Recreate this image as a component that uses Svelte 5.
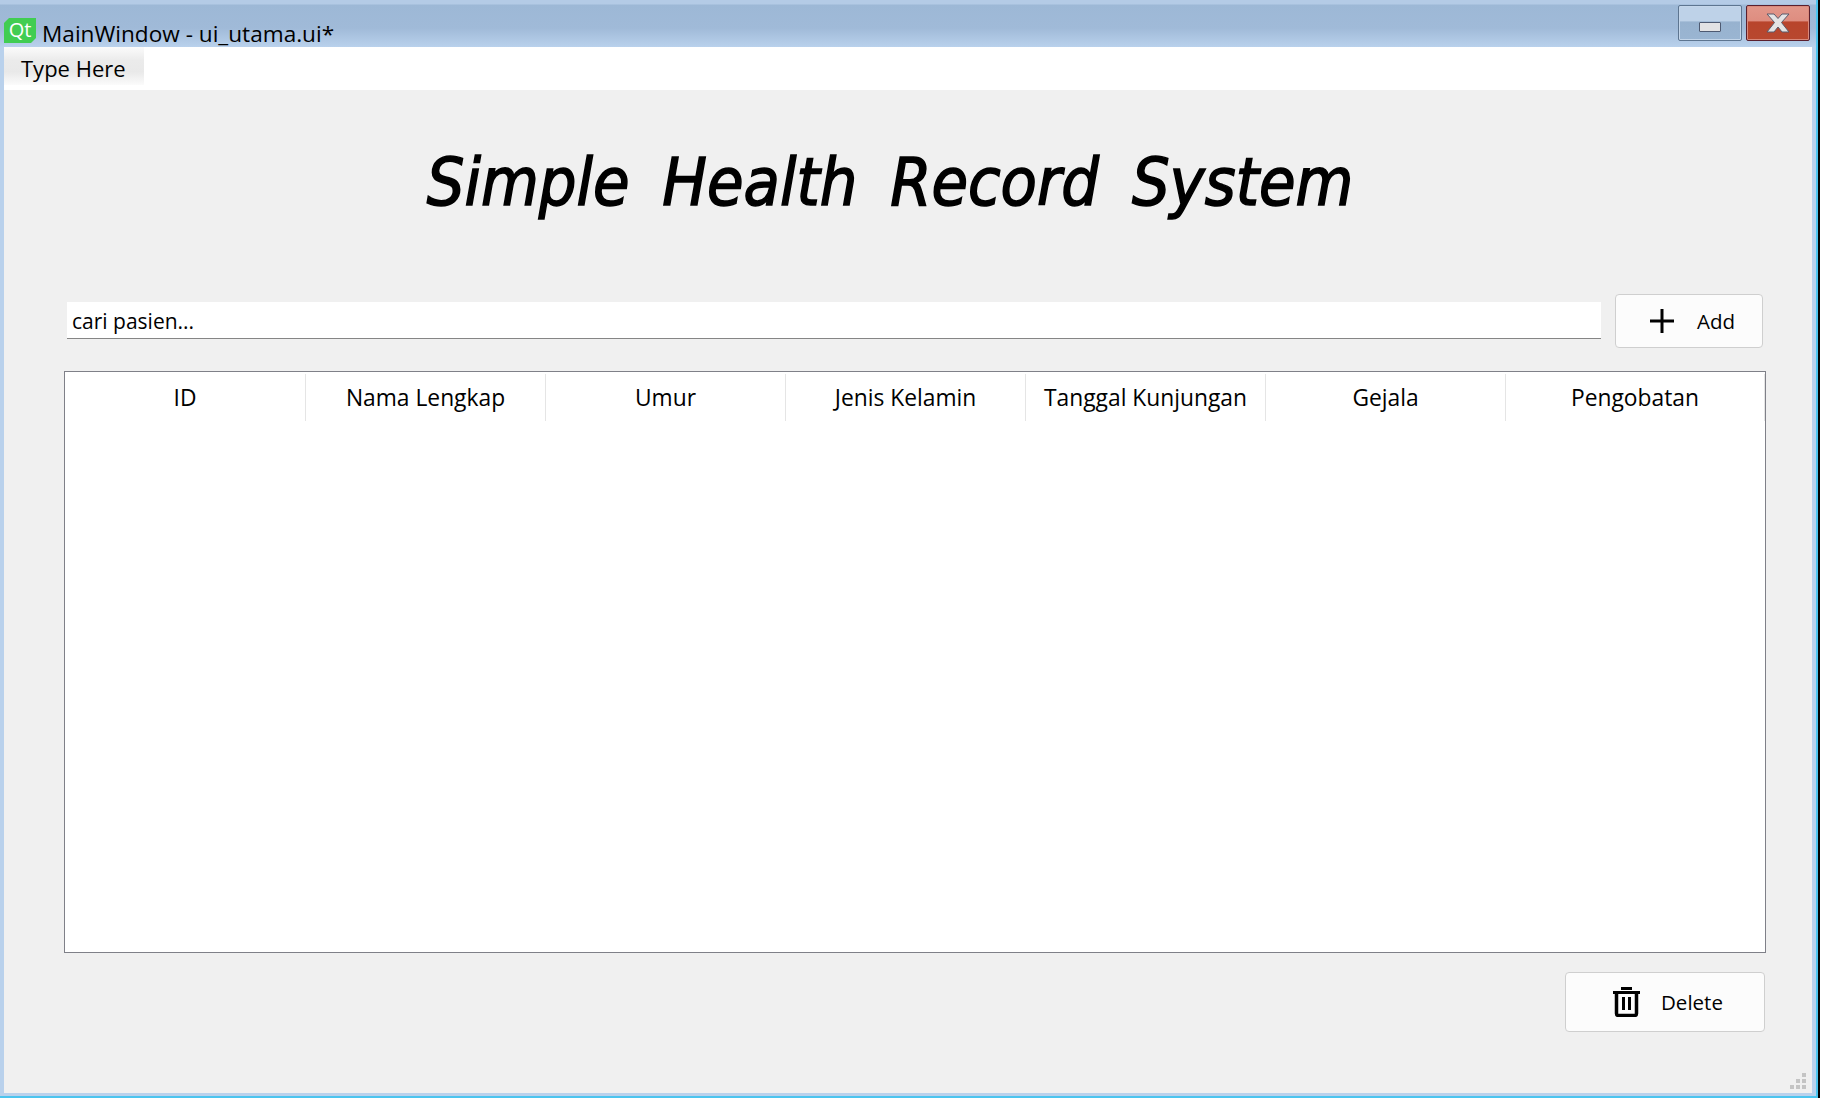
<script>
	// table header columns of the patient list
	let columns = ['ID', 'Nama Lengkap', 'Umur', 'Jenis Kelamin', 'Tanggal Kunjungan', 'Gejala', 'Pengobatan'];
</script>

<div class="window">
	<header class="titlebar">
		<div class="qt-logo">Qt</div>
		<span class="title-text">MainWindow - ui_utama.ui*</span>
		<div class="win-buttons">
			<div class="win-btn min"><span class="min-glyph"></span></div>
			<div class="win-btn close">
				<svg width="26" height="20" viewBox="0 0 26 20">
					<path d="M2 1h7l4 4.500 4-4.500h7l-7.500 8.500 7.500 9.500h-7l-4-5-4 5h-7l7.500-9.500z" fill="#e4e4e4" stroke="#5a5a6a" stroke-width="1" />
				</svg>
			</div>
		</div>
	</header>

	<div class="inner">
		<nav class="menubar">
			<div class="menu-item">Type Here</div>
		</nav>

		<main class="content">
			<h1 class="heading">Simple Health Record System</h1>

			<div class="search-row">
				<div class="search">cari pasien...</div>
				<button class="btn add">
					<svg width="24" height="24" viewBox="0 0 24 24">
						<path d="M12 0v24M0 12h24" stroke="#000" stroke-width="3" fill="none" />
					</svg>
					<span>Add</span>
				</button>
			</div>

			<div class="table">
				<div class="thead">
					{#each columns as col}
						<div class="th">{col}</div>
					{/each}
				</div>
			</div>

			<div class="actions">
				<button class="btn delete">
					<svg width="27" height="30" viewBox="0 0 27 30">
						<path d="M8 1.500h11M0 5.500h27" stroke="#000" stroke-width="3" fill="none" />
						<path d="M3.500 5v21.500q0 2 2 2h16q2 0 2-2V5" stroke="#000" stroke-width="3.500" fill="none" />
						<path d="M10.500 10v13M16.500 10v13" stroke="#000" stroke-width="3" fill="none" />
					</svg>
					<span>Delete</span>
				</button>
			</div>

			<div class="grip">
				{#each [[2, 0], [1, 1], [2, 1], [0, 2], [1, 2], [2, 2]] as d}
					<i style="grid-column: {d[0] + 1}; grid-row: {d[1] + 1}"></i>
				{/each}
			</div>
		</main>
	</div>
</div>

<style>
	:global(body) {
		margin: 0;
		background: #b9d1ec;
	}

	.window {
		width: 1821px;
		height: 1098px;
		box-sizing: border-box;
		display: flex;
		flex-direction: column;
		background: #b9d1ec;
		font-family: "Open Sans", "Noto Sans", sans-serif;
		color: #000;
		box-shadow: inset -1px 0 0 #fff, inset -3px 0 0 #000, inset -5px 0 0 #4cc4ee, inset 0 -2px 0 #4cc4ee;
		overflow: hidden;
	}

	.titlebar {
		height: 47px;
		flex: none;
		display: flex;
		align-items: flex-end;
		padding-left: 4px;
		padding-right: 11px;
		background: linear-gradient(#b4cbe6 0, #b4cbe6 4px, #9db8d6 5px, #a0bad8 28px, #b9d1ec 47px) no-repeat;
		background-size: 1816px 47px;
	}

	.qt-logo {
		width: 32px;
		height: 25px;
		margin-bottom: 4px;
		background: #41cd52;
		color: #fff;
		font-size: 20px;
		line-height: 23px;
		text-align: center;
		clip-path: polygon(5px 0, 100% 0, 100% calc(100% - 5px), calc(100% - 5px) 100%, 0 100%, 0 5px);
	}

	.title-text {
		margin-left: 6px;
		font-size: 22.600px;
		line-height: 30px;
		margin-bottom: -2px;
		white-space: nowrap;
	}

	.win-buttons {
		margin-left: auto;
		align-self: flex-start;
		display: flex;
		gap: 4px;
		margin-top: 5px;
	}

	.win-btn {
		height: 36px;
		box-sizing: border-box;
		border-radius: 2px;
		display: flex;
		align-items: center;
		justify-content: center;
	}

	.min {
		width: 64px;
		border: 1px solid #5d7590;
		box-shadow: inset 0 0 0 1px #c4d6ea;
		background: linear-gradient(#bed2e8 0, #bed2e8 45%, #97b2cf 46%, #9ab5d2 100%);
	}

	.min-glyph {
		width: 22px;
		height: 10px;
		margin-top: 8px;
		box-sizing: border-box;
		background: #e2e2e4;
		border: 1px solid #4e5a72;
		border-radius: 1px;
	}

	.close {
		width: 64px;
		border: 1px solid #5a1f2e;
		box-shadow: inset 0 0 0 1px #d98a7c;
		background: linear-gradient(#e2978a 0, #de8d80 45%, #b8442c 46%, #b8482f 100%);
	}

	.inner {
		flex: 1;
		min-height: 0;
		margin: 0 9px 5px 4px;
		display: flex;
		flex-direction: column;
		background: #f0f0f0;
	}

	.menubar {
		height: 43px;
		flex: none;
		background: #fff;
		display: flex;
	}

	.menu-item {
		width: 140px;
		height: 38px;
		box-sizing: border-box;
		padding: 3px 0 0 17px;
		font-size: 22px;
		line-height: 37px;
		background: linear-gradient(#fbfbfb, #ebebeb 35%, #e9e9e9 65%, #fbfbfb);
	}

	.content {
		flex: 1;
		min-height: 0;
		position: relative;
		display: flex;
		flex-direction: column;
		padding: 0 46px 0 60px;
	}

	.heading {
		margin: 57px 50px 0 0;
		height: 72px;
		text-align: center;
		font-family: "DejaVu Sans Condensed", "DejaVu Sans", sans-serif;
		font-style: italic;
		font-weight: 400;
		font-size: 66px;
		line-height: 72px;
		word-spacing: 14px;
		-webkit-text-stroke: 1.500px #000;
		white-space: nowrap;
	}

	.search-row {
		margin-top: 75px;
		display: flex;
		align-items: center;
		padding-left: 3px;
	}

	.search {
		width: 1534px;
		height: 37px;
		margin-bottom: 1px;
		box-sizing: border-box;
		background: #fff;
		border-bottom: 1px solid #858585;
		padding-left: 5px;
		font-size: 21px;
		line-height: 38px;
	}

	.btn {
		display: flex;
		align-items: center;
		background: #fcfcfc;
		border: 1px solid #cfcfcf;
		border-radius: 4px;
		font: inherit;
		font-size: 20.500px;
		color: #000;
		padding: 0;
		box-sizing: border-box;
	}

	.add {
		width: 148px;
		height: 54px;
		margin-left: 14px;
		padding-left: 34px;
		gap: 23px;
	}

	.table {
		margin-top: 23px;
		height: 582px;
		flex: none;
		box-sizing: border-box;
		border: 1px solid #7f8088;
		background: #fff;
	}

	.thead {
		display: grid;
		grid-template-columns: 241px repeat(5, 240px) 1fr;
		height: 49px;
		padding-top: 2px;
		box-sizing: border-box;
	}

	.th {
		display: flex;
		align-items: center;
		justify-content: center;
		font-size: 22.800px;
		border-right: 1px solid #e5e5e5;
		box-sizing: border-box;
	}

	.actions {
		display: flex;
		justify-content: flex-end;
		margin: 19px 1px 0 0;
	}

	.delete {
		width: 200px;
		height: 60px;
		padding-left: 47px;
		gap: 21px;
	}

	.grip {
		position: absolute;
		right: 6px;
		bottom: 4px;
		display: grid;
		grid-template-columns: repeat(3, 4px);
		grid-template-rows: repeat(3, 4px);
		gap: 2px;
	}

	.grip i {
		background: #c4c4c4;
	}
</style>
